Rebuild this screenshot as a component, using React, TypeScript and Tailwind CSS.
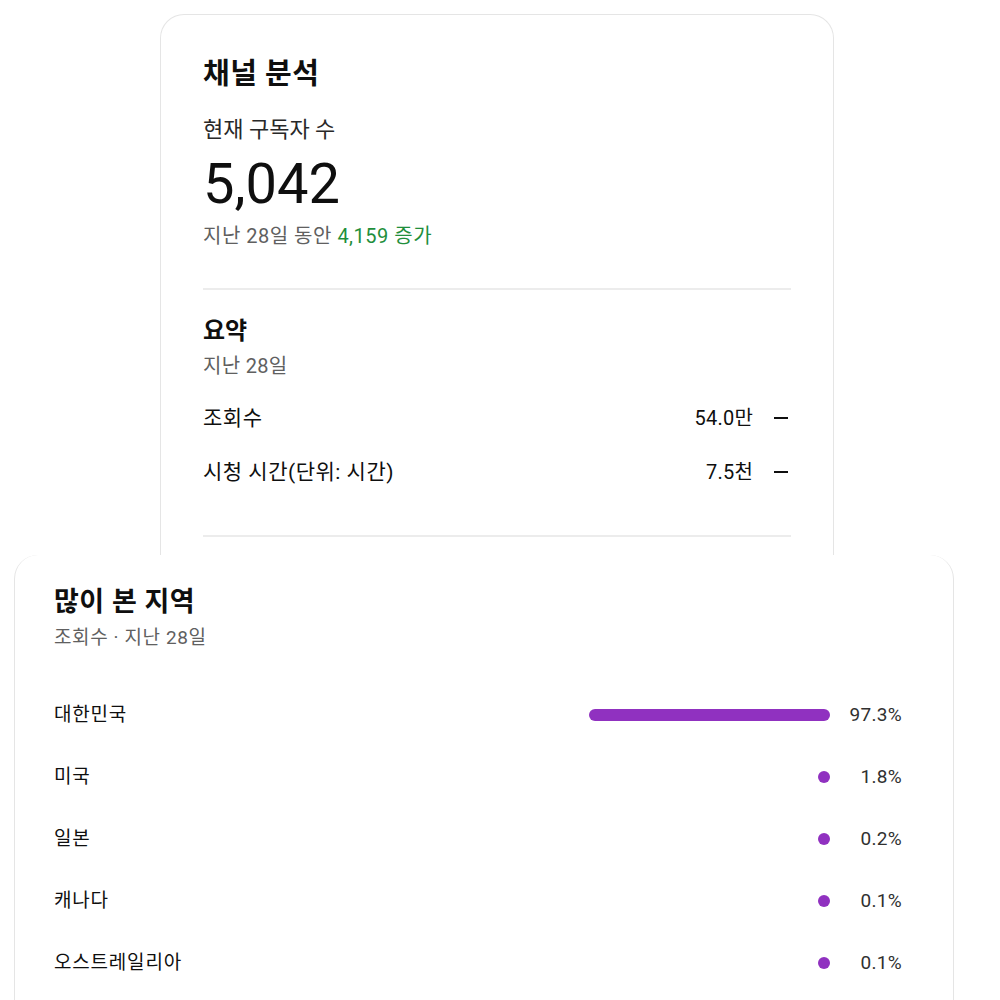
import React from 'react';

const regions = [
  { name: '대한민국', pct: 97.3 },
  { name: '미국', pct: 1.8 },
  { name: '일본', pct: 0.2 },
  { name: '캐나다', pct: 0.1 },
  { name: '오스트레일리아', pct: 0.1 },
];

function StatRow({ label, value }: { label: string; value: string }) {
  return (
    <div className="flex items-center justify-between h-[28px] text-[20px] leading-[28px] text-[#0f0f0f]">
      <span className="text-[21px] tracking-[0.5px]">{label}</span>
      <div className="flex items-center gap-[21px] pr-[3px]">
        <span className="tracking-[0.2px]">{value}</span>
        <span className="block w-[14px] h-[2px] bg-[#0f0f0f]" />
      </div>
    </div>
  );
}

export default function App() {
  return (
    <div className="bg-white w-[1000px] h-[1000px] overflow-hidden font-['Roboto','Noto_Sans_CJK_KR',sans-serif]">
      {/* Channel analytics */}
      <div className="pt-[14px] pl-[160px]">
        <div className="w-[674px] bg-white border border-b-0 border-[#e5e5e5] rounded-t-[24px] px-[42px] pt-[41px] pb-[18px]">
          <p className="text-[29px] leading-[36px] font-bold tracking-[0.5px] text-[#0f0f0f]">채널 분석</p>
          <p className="mt-[24px] text-[22px] leading-[28px] text-[#282828]">현재 구독자 수</p>
          <p className="mt-[8px] text-[56px] leading-[64px] text-[#0f0f0f]">5,042</p>
          <p className="mt-[6px] text-[20px] leading-[28px] tracking-[0.5px] text-[#606060]">
            지난 28일 동안 <span className="text-[#1f8f3c]">4,159 증가</span>
          </p>
          <div className="mt-[38px] h-[2px] bg-[#ececec]" />
          <p className="mt-[25px] text-[24px] leading-[32px] font-bold text-[#0f0f0f]">요약</p>
          <p className="mt-[5px] text-[20px] leading-[28px] tracking-[0.3px] text-[#606060]">지난 28일</p>
          <div className="mt-[24px] flex flex-col gap-[26px]">
            <StatRow label="조회수" value="54.0만" />
            <StatRow label="시청 시간(단위: 시간)" value="7.5천" />
          </div>
          <div className="mt-[49px] h-[2px] bg-[#ececec]" />
        </div>
      </div>

      {/* Top regions */}
      <div className="pl-[14px]">
        <div className="w-[940px] bg-white border-x border-[#e5e5e5] rounded-t-[24px] pl-[39px] pr-[51px] pt-[30px] pb-[40px]">
          <p className="text-[27px] leading-[34px] font-bold tracking-[0.5px] text-[#0f0f0f]">많이 본 지역</p>
          <p className="mt-[6px] text-[19px] leading-[26px] tracking-[0.6px] text-[#606060]">조회수 · 지난 28일</p>
          <div className="mt-[33px] flex flex-col">
            {regions.map((r) => (
              <div key={r.name} className="flex items-center justify-between h-[62px]">
                <span className="text-[19px] leading-[26px] tracking-[0.8px] text-[#0f0f0f]">{r.name}</span>
                <div className="flex items-center gap-[18px]">
                  <div className="w-[248px] flex justify-end">
                    <div
                      className="h-[12px] min-w-[12px] rounded-full bg-[#9031c0]"
                      style={{ width: `${r.pct}%` }}
                    />
                  </div>
                  <span className="w-[54px] text-right text-[19px] leading-[26px] tracking-[0.3px] text-[#303030]">{r.pct.toFixed(1)}%</span>
                </div>
              </div>
            ))}
          </div>
        </div>
      </div>
    </div>
  );
}
